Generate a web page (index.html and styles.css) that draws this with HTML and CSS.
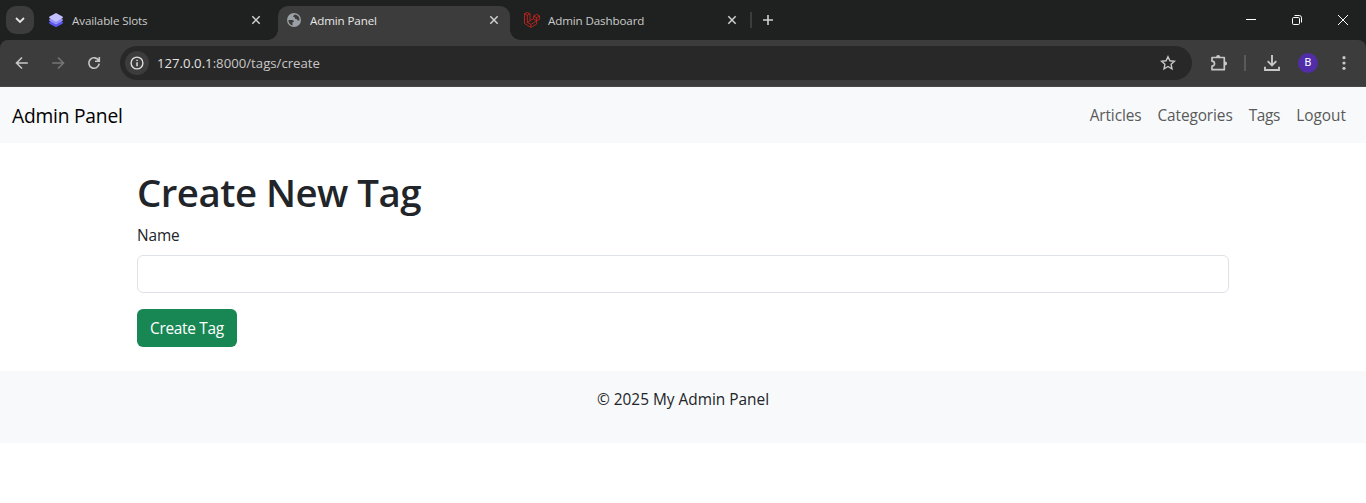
FILE: index.html
```html
<!DOCTYPE html>
<html lang="en">
<head>
<meta charset="utf-8">
<title>Admin Panel</title>
<link rel="stylesheet" href="styles.css">
</head>
<body>
<header class="tabstrip">
  <button class="tab-search" aria-label="Search tabs"><svg width="12" height="12" viewBox="0 0 12 12" fill="none" stroke="#e3e3e3" stroke-width="1.8"><path d="M2 4l4 4 4-4"/></svg></button>
  <div class="tab">
    <svg class="favicon" width="16" height="16" viewBox="0 0 16 16"><path d="M8 6.500l6.800 3.600v1.300L8 15.200 1.200 11.400v-1.300z" fill="#5a57f2"/><path d="M8 4l6.800 3.500v1.300L8 12.500 1.200 8.800V7.500z" fill="#9491fa"/><path d="M8 1l6.800 3.700V6L8 9.800 1.200 6V4.700z" fill="#c3c1ff"/></svg>
    <span class="tab-title t-slots">Available Slots</span>
    <svg class="close" width="10" height="10" viewBox="0 0 10 10"><path d="M1.300 1.300l7.400 7.400M8.700 1.300l-7.400 7.400"/></svg>
  </div>
  <div class="tab active">
    <svg class="favicon" width="16" height="16" viewBox="0 0 16 16"><circle cx="8" cy="8" r="7" fill="#9aa0a6"/><path d="M8.900 2.600C7.800 3.100 7.200 3.800 7.100 4.800c1.700.2 2.300 1 2 2.200 1.400-.2 2.400.5 2.500 1.500h1.900A5.600 5.600 0 0 0 8.900 2.600zM2.400 8h3.700c1.300 0 2 .8 1.800 2H6.500v3.400C4 12.700 2.300 10.600 2.400 8z" fill="#3c3c3c"/></svg>
    <span class="tab-title t-panel">Admin Panel</span>
    <svg class="close" width="10" height="10" viewBox="0 0 10 10"><path d="M1.300 1.300l7.400 7.400M8.700 1.300l-7.400 7.400"/></svg>
  </div>
  <div class="tab">
    <svg class="favicon" width="16" height="16" viewBox="0 0 16 16" fill="none" stroke="#d8251d" stroke-width=".8" stroke-linejoin="round"><path d="M.5 1.700L3.300.4 6 1.700v7l3.600-2V4l3-1.700 3 1.700v3.200l-3 1.700v3.200l-5.700 3.300L.5 11.500zM.5 1.700l2.800 1.500L6 1.700M3.300 3.200v7.300L6 8.700M3.300 10.500l3.600 1.900 5.700-3.500M6.900 12.400v3M9.600 4l3 1.800 3-1.800M12.600 5.800v3M9.600 6.800l3 1.900"/></svg>
    <span class="tab-title t-dash">Admin Dashboard</span>
    <svg class="close" width="10" height="10" viewBox="0 0 10 10"><path d="M1.300 1.300l7.400 7.400M8.700 1.300l-7.400 7.400"/></svg>
  </div>
  <span class="tab-sep"></span>
  <svg class="plus" width="12" height="12" viewBox="0 0 12 12" fill="none" stroke="#d0d0d0" stroke-width="1.600"><path d="M6 1v10M1 6h10"/></svg>
  <div class="window-controls">
    <svg width="46" height="40" viewBox="0 0 46 40"><path d="M18 19.500h10"/></svg>
    <svg width="46" height="40" viewBox="0 0 46 40"><rect x="18.500" y="17.500" width="7" height="7" rx="1.200"/><path d="M20.500 15.500h4.700a2.300 2.300 0 0 1 2.300 2.300v4.700"/></svg>
    <svg width="46" height="40" viewBox="0 0 46 40"><path d="M18 15l10 10M28 15l-10 10"/></svg>
  </div>
</header>
<div class="toolbar-back">
  <nav class="toolbar">
    <svg class="tool" width="36" height="36" viewBox="0 0 36 36"><path d="M23.800 18H12.700M18 12.500L12.500 18l5.500 5.500"/></svg>
    <svg class="tool dim" width="36" height="36" viewBox="0 0 36 36"><path d="M12.200 18h11.100M18 12.500l5.500 5.500-5.500 5.500"/></svg>
    <svg class="tool" width="36" height="36" viewBox="0 0 36 36"><path d="M22.700 15.700A5.200 5.200 0 1 0 23.200 18.700M23.300 12v4.300H19"/></svg>
    <div class="omnibox">
      <span class="site-info"><svg width="14" height="14" viewBox="0 0 14 14"><circle cx="7" cy="7" r="5.900" fill="none" stroke="#dedede" stroke-width="1.400"/><path d="M6.300 6.200h1.500v4H6.300zM6.300 3.700h1.500v1.400H6.300z" fill="#dedede"/></svg></span>
      <span class="url"><b>127.0.0.1</b>:8000/tags/create</span>
      <svg class="star" width="16" height="16" viewBox="0 0 16 16" fill="none" stroke="#c7c7c7" stroke-width="1.400"><path d="M8 1.700l1.900 4.100 4.500.5-3.300 3 .9 4.500L8 11.500l-4 2.300.9-4.500-3.300-3 4.500-.5z"/></svg>
    </div>
    <svg class="puzzle" width="18" height="18" viewBox="0 0 18 18"><path d="M2 3.500h12.300v12.200H2v-3.500a2.300 2.300 0 0 0 0-5z" fill="none" stroke="#c7c7c7" stroke-width="1.700" stroke-linejoin="round"/><path d="M6.100 3a2.100 2.100 0 0 1 4.200 0zM15 7.400a2.100 2.100 0 0 1 0 4.200z" fill="#c7c7c7"/></svg>
    <span class="tool-sep"></span>
    <svg class="download" width="18" height="18" viewBox="0 0 18 18" fill="none" stroke="#c7c7c7" stroke-width="1.900"><path d="M9 1v10.200M4.700 7.200L9 11.500l4.300-4.300M2 12.800V16h14v-3.200"/></svg>
    <span class="avatar">B</span>
    <svg class="menu" width="4" height="16" viewBox="0 0 4 16" fill="#c7c7c7"><circle cx="2" cy="2.700" r="1.600"/><circle cx="2" cy="8" r="1.600"/><circle cx="2" cy="13.300" r="1.600"/></svg>
  </nav>
</div>
<div class="navbar">
  <a class="brand">Admin Panel</a>
  <div class="nav-links"><a class="l-articles">Articles</a><a class="l-categories">Categories</a><a class="l-tags">Tags</a><a class="l-logout">Logout</a></div>
</div>
<main class="container">
  <h1>Create New Tag</h1>
  <form>
    <label for="name">Name</label>
    <input id="name" type="text">
    <button class="submit" type="button">Create Tag</button>
  </form>
</main>
<footer class="footer"><p>© 2025 My Admin Panel</p></footer>
</body>
</html>
```
FILE: styles.css
```css
* { box-sizing: border-box; }
body { margin: 0; background: #fff; color: #212529; font: 15.4px/24px "Segoe UI", "Open Sans", sans-serif; overflow: hidden; }
svg { display: block; flex: none; }
button { border: 0; font: inherit; }

.tabstrip { display: flex; align-items: center; height: 40px; background: #1f2120; }
.tab-search { display: flex; align-items: center; justify-content: center; width: 28px; height: 28px; margin: 0 6px; padding: 0; border-radius: 10px; background: #3c3c3c; }
.tab { display: flex; align-items: center; position: relative; width: 238px; height: 40px; padding: 0 17px 0 8px; color: #cacaca; font-size: 11.6px; line-height: 16px; }
.tab-title { flex: 1; margin-left: 8px; padding-top: 2px; letter-spacing: -.12px; white-space: nowrap; }
.close { fill: none; stroke: #d0d0d0; stroke-width: 1.5; }
.active { color: #e8e8e8; }
.active::before { content: ""; position: absolute; z-index: -1; inset: 6px 6px 0 0; border-radius: 10px 10px 0 0; background: #3c3c3c; }
.active { z-index: 1; }
.active::after { content: ""; position: absolute; z-index: -1; left: -10px; right: -4px; bottom: 0; height: 10px; background: radial-gradient(circle at 0 0, transparent 9.5px, #3c3c3c 10px) left / 10px 10px no-repeat, radial-gradient(circle at 100% 0, transparent 9.5px, #3c3c3c 10px) right / 10px 10px no-repeat; }
.tab-sep { width: 2px; height: 16px; margin-left: -4px; background: #3c3c3c; }
.plus { margin-left: 10px; }
.window-controls { display: flex; margin-left: auto; fill: none; stroke: #fff; stroke-width: 1; }

.toolbar-back { background: #1f2120; }
.toolbar { display: flex; align-items: center; height: 47px; padding: 0 20px 1px 4px; border-radius: 8px 8px 0 0; background: linear-gradient(#484848, #484848) bottom / 100% 1px no-repeat #3c3c3c; }
.tool { fill: none; stroke: #c7c7c7; stroke-width: 1.6; }
.dim { stroke: #757575; }
.omnibox { display: flex; align-items: center; width: 1072px; height: 34px; margin-left: 8px; padding: 0 16px 0 5px; border-radius: 17px; background: #282828; }
.site-info { display: flex; align-items: center; justify-content: center; width: 24px; height: 24px; border-radius: 50%; background: #3c3c3c; }
.url { flex: 1; margin-left: 8px; color: #c7c7c7; font-size: 13.2px; line-height: 20px; white-space: nowrap; }
.url b { color: #e3e3e3; font-weight: 400; }
.puzzle { margin-left: 18px; }
.tool-sep { width: 2px; height: 16px; margin-left: 16px; background: #5a5a5a; }
.download { margin-left: 17px; }
.avatar { width: 20px; height: 20px; margin-left: 17px; border-radius: 50%; background: #512da8; color: #fff; font: 11px/20px Roboto, sans-serif; text-align: center; }
.menu { margin-left: auto; }

.navbar { display: flex; align-items: center; justify-content: space-between; height: 56px; padding: 2px 12px 0; background: #f8f9fa; }
.brand { color: #000; font-size: 19.2px; line-height: 30px; letter-spacing: -.2px; white-space: nowrap; }
.nav-links { display: flex; color: #595a5b; }
.nav-links a { padding: 8px; letter-spacing: -.1px; white-space: nowrap; }
.nav-links .l-tags { letter-spacing: -.3px; }
.nav-links .l-logout { letter-spacing: 0; }
.container { width: 1116px; margin: 0 auto; padding: 24px 12px; }
h1 { margin: 3px 0 10px; font-size: 38.4px; line-height: 44px; font-weight: 600; letter-spacing: -.52px; white-space: nowrap; }
form { display: flex; flex-direction: column; align-items: flex-start; }
label { margin-bottom: 7px; letter-spacing: -.1px; }
input { width: 100%; height: 38px; margin-bottom: 16px; padding: 6px 12px; border: 1px solid #dee2e6; border-radius: 6px; background: #fff; }
.submit { width: 100px; height: 38px; padding: 2px 0 0 13px; border-radius: 6px; background: #198754; color: #fff; letter-spacing: -.3px; text-align: left; white-space: nowrap; }
.footer { height: 72px; padding: 17px 16px 0; background: #f8f9fa; text-align: center; }
.footer p { margin: 0; }
```
